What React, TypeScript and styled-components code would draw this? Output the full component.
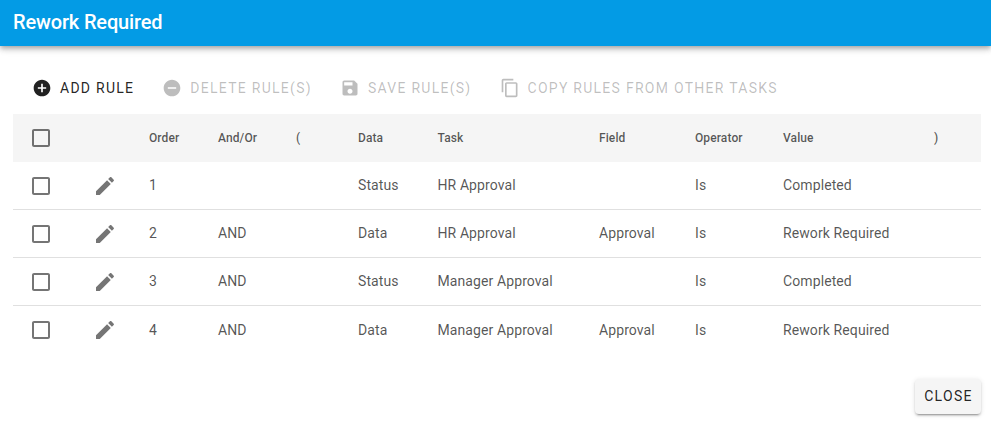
import { FunctionComponent } from "react";
import styled, { createGlobalStyle } from "styled-components";

const GlobalStyle = createGlobalStyle`
  html, body {
    margin: 0;
    padding: 0;
    background: #fff;
    font-family: Roboto, "Liberation Sans", sans-serif;
  }
`;

const DialogRoot = styled.div`
  width: 991px;
  height: 424px;
  display: flex;
  flex-direction: column;
  overflow: hidden;
  background: #fff;
`;
const Header = styled.header`
  height: 46px;
  flex-shrink: 0;
  display: flex;
  align-items: center;
  padding: 0 0 2px 13px;
  box-sizing: border-box;
  background: #039be5;
  color: #fff;
  font-size: 20px;
  font-weight: 500;
  letter-spacing: -0.15px;
  box-shadow: 0 2px 4px -1px rgba(0, 0, 0, 0.2), 0 4px 5px 0 rgba(0, 0, 0, 0.14), 0 1px 10px 0 rgba(0, 0, 0, 0.12);
`;
const Toolbar = styled.div`
  display: flex;
  gap: 12px;
  padding: 24px 0 0 24px;
`;
const ToolButton = styled.button<{ $off?: boolean }>`
  height: 36px;
  padding: 0 8px;
  display: flex;
  align-items: center;
  gap: 8px;
  border: none;
  background: none;
  font-family: inherit;
  font-size: 14px;
  font-weight: 400;
  letter-spacing: 1.27px;
  white-space: nowrap;
  color: ${(p) => (p.$off ? "rgba(0, 0, 0, 0.26)" : "rgba(0, 0, 0, 0.87)")};
`;
const ToolIcon = styled.svg`
  width: 20px;
  height: 20px;
  fill: currentColor;
  flex-shrink: 0;
`;
const Table = styled.div`
  margin: 8px 10px 0 13px;
`;
const Row = styled.div<{ $head?: boolean }>`
  display: grid;
  grid-template-columns: 80px 56px 69px 78px 62px 79.5px 161.5px 96px 88px 151px 47px;
  align-items: center;
  height: ${(p) => (p.$head ? "48px" : "48.15px")};
  box-sizing: border-box;
  background: ${(p) => (p.$head ? "#f5f5f5" : "transparent")};
  border-bottom: ${(p) => (p.$head ? "none" : "1px solid #e0e0e0")};
  color: ${(p) => (p.$head ? "rgba(0, 0, 0, 0.66)" : "rgba(0, 0, 0, 0.68)")};
  font-size: ${(p) => (p.$head ? "12px" : "14px")};
  font-weight: ${(p) => (p.$head ? 500 : 400)};
  letter-spacing: 0.1px;
  &:last-child {
    border-bottom: none;
  }
`;
const CheckCell = styled.div`
  padding-left: 16px;
  display: flex;
`;
const RowIcon = styled.svg`
  display: block;
  width: 24px;
  height: 24px;
  fill: rgba(0, 0, 0, 0.54);
`;
const Cell = styled.div`
  white-space: nowrap;
  padding-bottom: 1px;
`;
const Footer = styled.div`
  display: flex;
  justify-content: flex-end;
  padding: 24px 10px 0 0;
`;
const CloseButton = styled.button`
  width: 66px;
  height: 35px;
  padding: 0 0 0 1px;
  border: none;
  border-radius: 4px;
  background: #f5f5f5;
  color: rgba(0, 0, 0, 0.87);
  font-family: inherit;
  font-size: 14px;
  font-weight: 400;
  letter-spacing: 1.3px;
  box-shadow: 0 3px 1px -2px rgba(0, 0, 0, 0.2), 0 2px 2px 0 rgba(0, 0, 0, 0.14), 0 1px 5px 0 rgba(0, 0, 0, 0.12);
`;

const ADD = "M12 2C6.48 2 2 6.48 2 12s4.48 10 10 10 10-4.48 10-10S17.52 2 12 2zm5 11h-4v4h-2v-4H7v-2h4V7h2v4h4v2z";
const REMOVE = "M12 2C6.48 2 2 6.48 2 12s4.48 10 10 10 10-4.48 10-10S17.52 2 12 2zm5 11H7v-2h10v2z";
const SAVE = "M17 3H5c-1.11 0-2 .9-2 2v14c0 1.1.89 2 2 2h14c1.1 0 2-.9 2-2V7l-4-4zm-5 16c-1.66 0-3-1.34-3-3s1.34-3 3-3 3 1.34 3 3-1.34 3-3 3zm3-10H5V5h10v4z";
const COPY = "M16 1H4c-1.1 0-2 .9-2 2v14h2V3h12V1zm3 4H8c-1.1 0-2 .9-2 2v14c0 1.1.9 2 2 2h11c1.1 0 2-.9 2-2V7c0-1.1-.9-2-2-2zm0 16H8V7h11v14z";
const EDIT = "M3 17.25V21h3.75L17.81 9.94l-3.75-3.75L3 17.25zM20.71 7.04c.39-.39.39-1.02 0-1.41l-2.34-2.34c-.39-.39-1.02-.39-1.41 0l-1.83 1.83 3.75 3.75 1.83-1.83z";
const CHECK = "M19 5v14H5V5h14m0-2H5c-1.1 0-2 .9-2 2v14c0 1.1.9 2 2 2h14c1.1 0 2-.9 2-2V5c0-1.1-.9-2-2-2z";

const actions = [
  { label: "ADD RULE", icon: ADD, off: false },
  { label: "DELETE RULE(S)", icon: REMOVE, off: true },
  { label: "SAVE RULE(S)", icon: SAVE, off: true },
  { label: "COPY RULES FROM OTHER TASKS", icon: COPY, off: true },
];
const columns = ["Order", "And/Or", "(", "Data", "Task", "Field", "Operator", "Value", ")"];
const rules = [
  ["1", "", "", "Status", "HR Approval", "", "Is", "Completed", ""],
  ["2", "AND", "", "Data", "HR Approval", "Approval", "Is", "Rework Required", ""],
  ["3", "AND", "", "Status", "Manager Approval", "", "Is", "Completed", ""],
  ["4", "AND", "", "Data", "Manager Approval", "Approval", "Is", "Rework Required", ""],
];

const Check: FunctionComponent = () => (
  <CheckCell>
    <RowIcon viewBox="0 0 24 24">
      <path d={CHECK} />
    </RowIcon>
  </CheckCell>
);

const App: FunctionComponent = () => {
  return (
    <DialogRoot>
      <GlobalStyle />
      <Header>Rework Required</Header>
      <Toolbar>
        {actions.map((a) => (
          <ToolButton key={a.label} $off={a.off}>
            <ToolIcon viewBox="0 0 24 24">
              <path d={a.icon} />
            </ToolIcon>
            {a.label}
          </ToolButton>
        ))}
      </Toolbar>
      <Table>
        <Row $head>
          <Check />
          <div />
          {columns.map((c) => (
            <Cell key={c}>{c}</Cell>
          ))}
        </Row>
        {rules.map((r) => (
          <Row key={r[0]}>
            <Check />
            <RowIcon viewBox="0 0 24 24">
              <path d={EDIT} />
            </RowIcon>
            {r.map((v, i) => (
              <Cell key={i}>{v}</Cell>
            ))}
          </Row>
        ))}
      </Table>
      <Footer>
        <CloseButton>CLOSE</CloseButton>
      </Footer>
    </DialogRoot>
  );
};

export default App;
